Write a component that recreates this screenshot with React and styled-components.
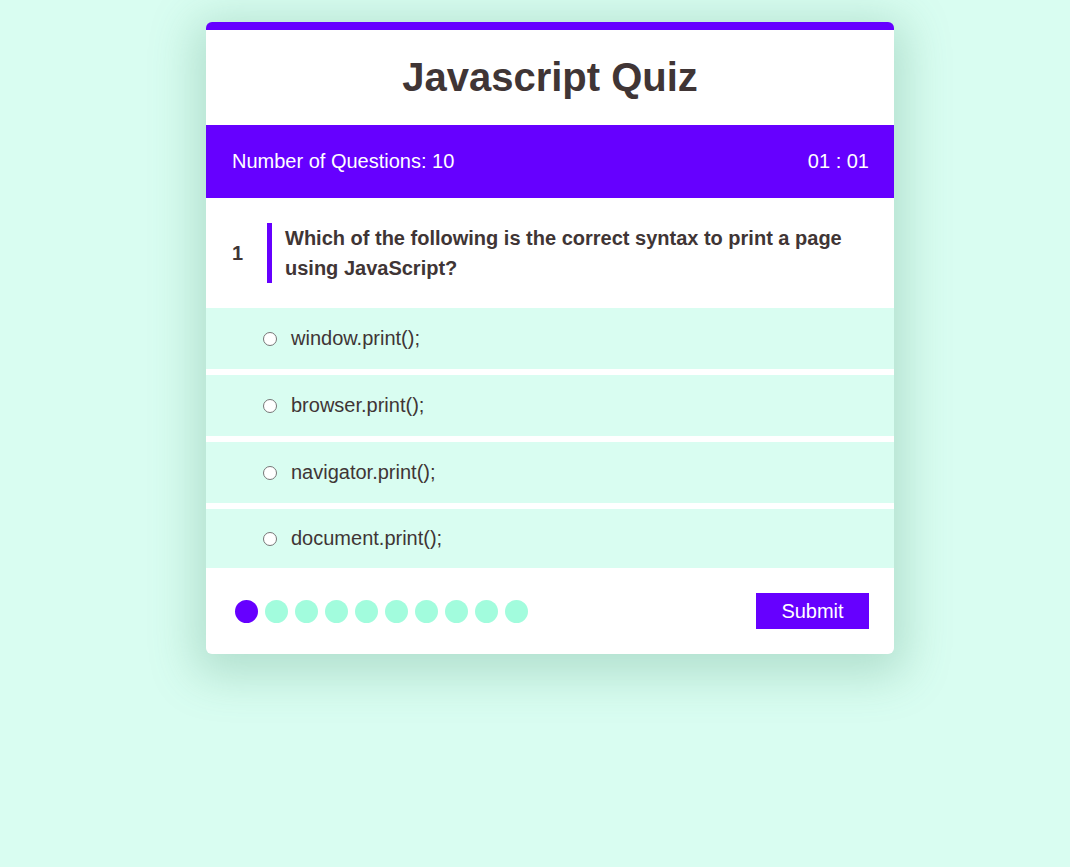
import React from 'react';
import styled, { createGlobalStyle } from 'styled-components';

const Global = createGlobalStyle`
  body {
    margin: 0;
    background: #d9fdf1;
    font-family: "Liberation Sans", Arial, sans-serif;
  }
`;

const Page = styled.div`
  display: flex;
  justify-content: center;
  align-items: flex-start;
  padding: 22px 0 0 30px;
  min-height: 867px;
  box-sizing: border-box;
`;

const Card = styled.div`
  width: 688px;
  background: #fff;
  border-top: 8px solid #6600ff;
  border-radius: 6px;
  overflow: hidden;
  box-shadow: 0 10px 45px 12px rgba(80, 150, 120, 0.28);
`;

const Title = styled.h1`
  margin: 0;
  height: 95px;
  display: flex;
  align-items: center;
  justify-content: center;
  font-size: 40px;
  font-weight: 700;
  color: #403535;
`;

const InfoBar = styled.div`
  height: 73px;
  background: #6600ff;
  color: #fff;
  display: flex;
  align-items: center;
  justify-content: space-between;
  padding: 0 25px 0 26px;
  font-size: 20px;
`;

const QuestionRow = styled.div`
  display: flex;
  align-items: center;
  padding: 25px 25px 25px 26px;
`;

const QNum = styled.span`
  width: 35px;
  flex-shrink: 0;
  font-size: 20px;
  font-weight: 700;
  color: #403535;
`;

const QText = styled.div`
  border-left: 5px solid #6600ff;
  padding-left: 13px;
  font-size: 20px;
  font-weight: 700;
  line-height: 30px;
  color: #403535;
`;

const Options = styled.div`
  display: flex;
  flex-direction: column;
  gap: 6px;
`;

const Option = styled.label`
  height: 61px;
  background: #d9fdf1;
  display: flex;
  align-items: center;
  padding-left: 57px;
  font-size: 20px;
  color: #403535;
  cursor: pointer;
  &:last-child {
    height: 59px;
  }
`;

const Radio = styled.span`
  width: 12px;
  height: 12px;
  border: 1px solid #767676;
  border-radius: 50%;
  background: #fff;
  margin-right: 14px;
`;

const Footer = styled.div`
  height: 86px;
  display: flex;
  align-items: center;
  justify-content: space-between;
  padding: 0 25px 0 29px;
`;

const Dots = styled.div`
  display: flex;
  gap: 7px;
`;

const Dot = styled.span`
  width: 23px;
  height: 23px;
  border-radius: 50%;
  background: ${({ active }) => (active ? '#6600ff' : '#a2fcdd')};
`;

const SubmitButton = styled.button`
  width: 113px;
  height: 36px;
  border: none;
  background: #6600ff;
  color: #fff;
  font-family: inherit;
  font-size: 20px;
  cursor: pointer;
`;

const options = ['window.print();', 'browser.print();', 'navigator.print();', 'document.print();'];

export default function App() {
  return (
    <Page>
      <Global />
      <Card>
        <Title>Javascript Quiz</Title>
        <InfoBar>
          <span>Number of Questions: 10</span>
          <span>01 : 01</span>
        </InfoBar>
        <QuestionRow>
          <QNum>1</QNum>
          <QText>Which of the following is the correct syntax to print a page using JavaScript?</QText>
        </QuestionRow>
        <Options>
          {options.map((o) => (
            <Option key={o}>
              <Radio />
              {o}
            </Option>
          ))}
        </Options>
        <Footer>
          <Dots>
            {Array.from({ length: 10 }).map((_, i) => (
              <Dot key={i} active={i === 0} />
            ))}
          </Dots>
          <SubmitButton>Submit</SubmitButton>
        </Footer>
      </Card>
    </Page>
  );
}
